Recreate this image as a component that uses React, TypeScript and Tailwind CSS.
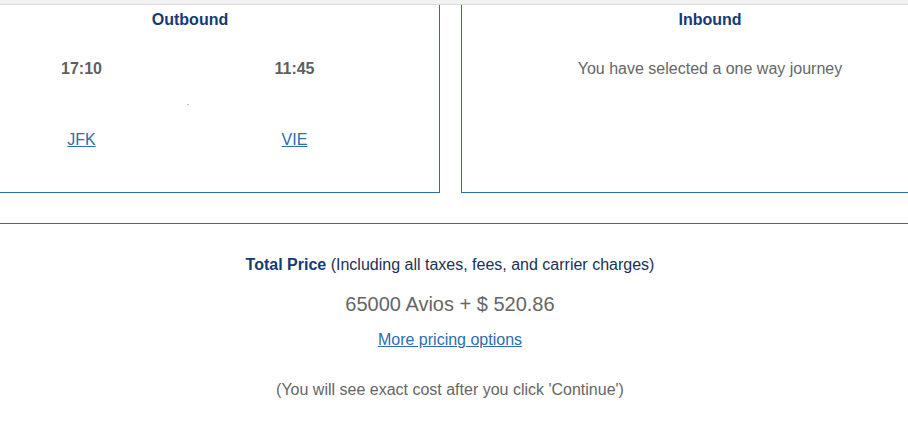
export default function App() {
  return (
    <div
      className="w-[908px] h-[424px] overflow-hidden bg-white text-[#666]"
      style={{ fontFamily: '"Liberation Sans", Arial, sans-serif' }}
    >
      {/* top strip */}
      <div className="h-[4px] bg-[#f2f2f2] border-b border-[#dcdcdc] box-content" />

      {/* journey panels */}
      <div className="flex w-[1020px] -ml-[60px] gap-[21px] h-[188px]">
        <div className="w-[500px] border-x border-b border-[#2c6db3]">
          <h2 className="pt-[5px] text-center text-[16px] font-bold text-[#153a75] leading-[20px]">Outbound</h2>
          <div className="flex ml-[87px] mt-[29px]">
            <div className="w-[107px] text-center">
              <div className="text-[16px] font-bold text-[#5f5f5f] leading-[20px]">17:10</div>
              <a href="#" className="block mt-[51px] text-[16px] text-[#2c6db3] underline leading-[20px]">JFK</a>
            </div>
            <div className="w-[106px] flex justify-center">
              <span className="mt-[45px] w-[2px] h-[1px] bg-[#bbb]" />
            </div>
            <div className="w-[107px] text-center">
              <div className="text-[16px] font-bold text-[#5f5f5f] leading-[20px]">11:45</div>
              <a href="#" className="block mt-[51px] text-[16px] text-[#2c6db3] underline leading-[20px]">VIE</a>
            </div>
          </div>
        </div>
        <div className="w-[498px] border-x border-b border-[#2c6db3]">
          <h2 className="pt-[5px] text-center text-[16px] font-bold text-[#153a75] leading-[20px]">Inbound</h2>
          <p className="mt-[29px] text-center text-[16px] text-[#666] leading-[20px]">You have selected a one way journey</p>
        </div>
      </div>

      {/* price summary */}
      <div className="mt-[30px] border-t border-[#2c6db3]">
        <div className="pr-[8px] text-center">
          <p className="mt-[31px] text-[16px] leading-[20px] text-[#1d2f55]">
            <span className="font-bold text-[#153a75]">Total Price</span> (Including all taxes, fees, and carrier charges)
          </p>
          <p className="mt-[17px] text-[20px] leading-[24px] text-[#666]">65000 Avios + $ 520.86</p>
          <a href="#" className="inline-block mt-[14px] text-[16px] leading-[20px] text-[#2c6db3] underline">More pricing options</a>
          <p className="mt-[28px] text-[16px] leading-[20px] text-[#666]">(You will see exact cost after you click 'Continue')</p>
        </div>
      </div>
    </div>
  );
}
